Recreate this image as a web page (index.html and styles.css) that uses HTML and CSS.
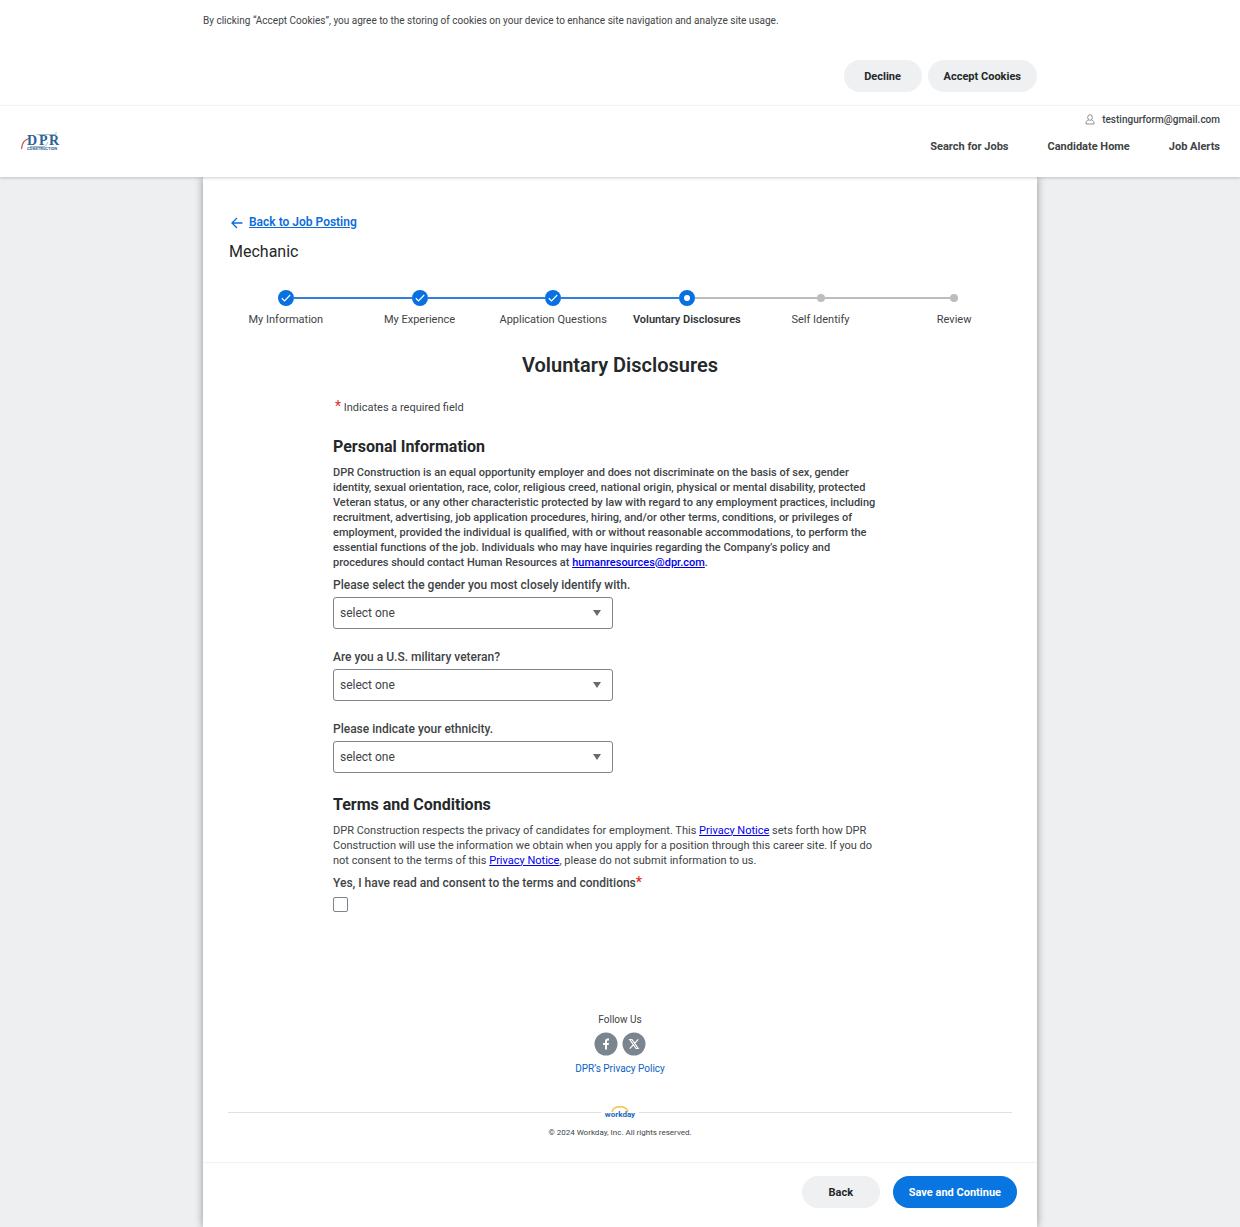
FILE: index.html
```html
<!DOCTYPE html>
<html lang="en">

<head>
    <meta charset="UTF-8">
    <meta name="viewport" content="width=device-width, initial-scale=1.0">
    <title>Voluntary Disclosures</title>
    <link rel="stylesheet" href="styles.css">
</head>

<body>
    <div class="cookie-banner">
        <div class="cookie-inner">
            <p>By clicking “Accept Cookies”, you agree to the storing of cookies on your device to enhance site navigation and analyze site usage.</p>
            <div class="cookie-actions">
                <button class="btn" type="button">Decline</button>
                <button class="btn" type="button">Accept Cookies</button>
            </div>
        </div>
    </div>

    <header class="site-header">
        <a class="logo" href="#" aria-label="DPR Construction">
            <svg width="40" height="22" viewBox="0 0 40 22">
                <path d="M1.5 18 C2 12.5 4.5 8.5 9 7.5" fill="none" stroke="#c4554d" stroke-width="1.2"/>
                <path d="M17 3.5 H36 V1 M10 15.5 H25 L28 11" fill="none" stroke="#a9bccb" stroke-width="1"/>
                <text class="logo-name" x="7 19 29" y="14" fill="#2b6196">DPR</text>
                <text class="logo-sub" x="7" y="19" fill="#2b6196">CONSTRUCTION</text>
            </svg>
        </a>
        <div class="header-right">
            <div class="account">
                <svg width="10" height="11" viewBox="0 0 10 11" fill="none" stroke="#8a8f94" stroke-width="1">
                    <ellipse cx="5" cy="3.5" rx="2.3" ry="2.8"/>
                    <path d="M3.6 6 C1.5 6.8 1 7.5 1 10 H9 C9 7.5 8.5 6.8 6.4 6"/>
                </svg>
                <span>testingurform@gmail.com</span>
            </div>
            <nav>
                <a href="#">Search for Jobs</a>
                <a href="#">Candidate Home</a>
                <a href="#">Job Alerts</a>
            </nav>
        </div>
    </header>

    <main class="page">
        <div class="job">
            <a class="back-link" href="#">
                <svg width="12" height="12" viewBox="0 0 12 12" fill="none" stroke="#0b6ddb" stroke-width="1.3">
                    <path d="M11.5 6 H1.2 M6 1 L1 6 L6 11"/>
                </svg>
                <span>Back to Job Posting</span>
            </a>
            <h3 class="job-title">Mechanic</h3>
        </div>

        <ol class="steps">
            <li class="done">
                <div class="track"><span class="dot"><svg width="10" height="10" viewBox="0 0 10 10"><path d="M0.8 5.3 L3.5 7.9 L9.2 2"/></svg></span></div>
                <span>My Information</span>
            </li>
            <li class="done">
                <div class="track"><span class="dot"><svg width="10" height="10" viewBox="0 0 10 10"><path d="M0.8 5.3 L3.5 7.9 L9.2 2"/></svg></span></div>
                <span>My Experience</span>
            </li>
            <li class="done">
                <div class="track"><span class="dot"><svg width="10" height="10" viewBox="0 0 10 10"><path d="M0.8 5.3 L3.5 7.9 L9.2 2"/></svg></span></div>
                <span>Application Questions</span>
            </li>
            <li class="current">
                <div class="track"><span class="dot"></span></div>
                <span>Voluntary Disclosures</span>
            </li>
            <li>
                <div class="track"><span class="dot"></span></div>
                <span>Self Identify</span>
            </li>
            <li>
                <div class="track"><span class="dot"></span></div>
                <span>Review</span>
            </li>
        </ol>

        <h2>Voluntary Disclosures</h2>

        <form class="form" id="disclosures">
            <p class="required-note"><span class="star">*</span> Indicates a required field</p>

            <h3>Personal Information</h3>
            <p class="statement">DPR Construction is an equal opportunity employer and does not discriminate on the basis of sex, gender identity, sexual orientation, race, color, religious creed, national origin, physical or mental disability, protected Veteran status, or any other characteristic protected by law with regard to any employment practices, including recruitment, advertising, job application procedures, hiring, and/or other terms, conditions, or privileges of employment, provided the individual is qualified, with or without reasonable accommodations, to perform the essential functions of the job. Individuals who may have inquiries regarding the Company’s policy and procedures should contact Human Resources at <a href="#">humanresources@dpr.com</a>.</p>

            <div class="field">
                <label for="gender">Please select the gender you most closely identify with.</label>
                <select id="gender">
                    <option>select one</option>
                </select>
            </div>
            <div class="field">
                <label for="veteran">Are you a U.S. military veteran?</label>
                <select id="veteran">
                    <option>select one</option>
                </select>
            </div>
            <div class="field">
                <label for="ethnicity">Please indicate your ethnicity.</label>
                <select id="ethnicity">
                    <option>select one</option>
                </select>
            </div>

            <h3>Terms and Conditions</h3>
            <p class="terms">DPR Construction respects the privacy of candidates for employment. This <a href="#">Privacy Notice</a> sets forth how DPR Construction will use the information we obtain when you apply for a position through this career site. If you do not consent to the terms of this <a href="#">Privacy Notice</a>, please do not submit information to us.</p>
            <div class="consent">
                <label for="consent">Yes, I have read and consent to the terms and conditions<span class="star">*</span></label>
                <input type="checkbox" id="consent">
            </div>
        </form>

        <footer class="footer">
            <p>Follow Us</p>
            <div class="social">
                <a href="#" aria-label="Facebook">
                    <svg width="24" height="24" viewBox="0 0 24 24">
                        <circle cx="12" cy="12" r="11.5" fill="#7b858f"/>
                        <path d="M11 17.5 V12.9 H9 V10.9 H11 V9.5 C11 7.5 12 6.5 13.8 6.5 H15 V8.4 H14 C13.3 8.4 13 8.8 13 9.5 V10.9 H15 L14.7 12.9 H13 V17.5 Z" fill="#fff"/>
                    </svg>
                </a>
                <a href="#" aria-label="X">
                    <svg width="24" height="24" viewBox="0 0 24 24">
                        <circle cx="12" cy="12" r="11.5" fill="#7b858f"/>
                        <path d="M7.8 7.5 H10 L16.2 16.5 H14 Z M16.2 7.3 L12.7 11.3 M11.3 12.9 L7.8 16.7" fill="none" stroke="#fff" stroke-width="1.2"/>
                    </svg>
                </a>
            </div>
            <a class="policy" href="#">DPR’s Privacy Policy</a>
            <div class="brand">
                <svg width="34" height="16" viewBox="0 0 34 16">
                    <path d="M9 8 C10.5 1 23.5 1 25 8" fill="none" stroke="#f3c24f" stroke-width="1.5"/>
                    <text class="brand-name" x="17" y="13" text-anchor="middle" fill="#1567b8">workday</text>
                </svg>
            </div>
            <small>© 2024 Workday, Inc. All rights reserved.</small>
        </footer>

        <div class="action-bar">
            <button class="btn" type="button">Back</button>
            <button class="btn btn-primary" type="submit" form="disclosures">Save and Continue</button>
        </div>
    </main>
</body>

</html>
```
FILE: styles.css
```css
* {
    box-sizing: border-box;
}

body {
    margin: 0;
    min-height: 100vh;
    display: flex;
    flex-direction: column;
    background: #eeeff1;
    color: #404446;
    font-family: Roboto, "Liberation Sans", sans-serif;
    font-size: 11px;
    line-height: 15px;
}

h2,
h3,
p {
    margin: 0;
}

.cookie-banner {
    background: #fff;
    border-bottom: 1px solid #fafafa;
}

.cookie-inner {
    max-width: 834px;
    margin: 0 auto;
    padding: 13px 0;
    font-size: 10px;
}

.cookie-actions {
    display: flex;
    justify-content: flex-end;
    gap: 6px;
    margin-top: 32px;
}

.btn {
    min-width: 78px;
    height: 32px;
    padding: 0 16px;
    border: none;
    border-radius: 16px;
    background: #eff0f1;
    color: #25282a;
    font-family: inherit;
    font-size: 11px;
    font-weight: 700;
    cursor: pointer;
}

.btn-primary {
    background: #0875e1;
    color: #fff;
}

.site-header {
    display: flex;
    justify-content: space-between;
    align-items: center;
    height: 71px;
    padding: 0 20px;
    background: #fff;
    box-shadow: 0 1px 3px rgba(0, 0, 0, 0.2);
    z-index: 1;
}

.logo svg {
    display: block;
}

.logo-name {
    font-family: "Liberation Serif", serif;
    font-size: 14px;
    font-weight: 700;
}

.logo-sub {
    font-size: 4px;
    font-weight: 700;
}

.header-right {
    display: flex;
    flex-direction: column;
    align-items: flex-end;
    gap: 12px;
    padding-bottom: 17px;
}

.account {
    display: flex;
    align-items: center;
    gap: 7px;
    font-size: 10px;
    font-weight: 500;
}

nav {
    display: flex;
    gap: 39px;
}

nav a {
    color: #404446;
    font-weight: 700;
    text-decoration: none;
}

.page {
    flex: 1;
    display: flex;
    flex-direction: column;
    width: 100%;
    max-width: 834px;
    margin: 0 auto;
    background: #fff;
    box-shadow: 0 0 8px rgba(0, 0, 0, 0.4);
}

.job {
    padding: 38px 26px 0;
}

.back-link {
    display: inline-flex;
    align-items: center;
    gap: 6px;
    padding-left: 2px;
    color: #0b6ddb;
    font-size: 12px;
    font-weight: 600;
}

.job-title {
    margin-top: 9px;
    color: #25282a;
    font-size: 16px;
    font-weight: 400;
    line-height: 20px;
}

.steps {
    display: grid;
    grid-template-columns: repeat(6, 1fr);
    margin: 27px 0 0;
    padding: 0 16px;
    list-style: none;
    text-align: center;
}

.track {
    display: flex;
    align-items: center;
    height: 18px;
    margin-bottom: 5px;
}

.track::before,
.track::after {
    content: "";
    flex: 1;
    height: 2px;
    background: #bdbdbd;
}

.done .track::before,
.done .track::after,
.current .track::before {
    background: #2f80de;
}

.steps li:first-child .track::before,
.steps li:last-child .track::after {
    background: none;
}

.dot {
    display: flex;
    align-items: center;
    justify-content: center;
    width: 8px;
    height: 8px;
    border-radius: 50%;
    background: #bdbdbd;
}

.done .dot {
    width: 16px;
    height: 16px;
    background: #0870e0;
}

.dot path {
    fill: none;
    stroke: #fff;
    stroke-width: 1.2;
}

.current .dot {
    width: 16px;
    height: 16px;
    border: 5px solid #0870e0;
    background: #fff;
}

.current {
    color: #303436;
    font-weight: 600;
}

h2 {
    margin-top: 26px;
    color: #25282a;
    font-size: 20px;
    font-weight: 600;
    line-height: 24px;
    text-align: center;
}

.form {
    padding: 0 130px;
}

.star {
    color: #de2e21;
    font-size: 14px;
    line-height: 12px;
}

.required-note {
    margin-top: 23px;
    padding-left: 2px;
}

.form h3 {
    margin: 22px 0 8px;
    color: #25282a;
    font-size: 16px;
    font-weight: 700;
    line-height: 20px;
}

.form a {
    color: #0000ee;
}

.statement,
.terms {
    max-width: 550px;
}

.statement {
    font-weight: 500;
}

.field {
    margin-bottom: 21px;
}

.statement + .field {
    margin-top: 8px;
}

.form label {
    display: block;
    margin-bottom: 4px;
    font-size: 12px;
    font-weight: 500;
}

select {
    appearance: none;
    display: block;
    width: 280px;
    max-width: 100%;
    height: 32px;
    padding: 0 6px;
    border: 1px solid #7b858f;
    border-radius: 3px;
    background: #fff url("data:image/svg+xml,%3Csvg xmlns='http://www.w3.org/2000/svg' width='8' height='6'%3E%3Cpath d='M0 0h8L4 6z' fill='%23666c72'/%3E%3C/svg%3E") no-repeat right 11px center;
    color: #404446;
    font-family: inherit;
    font-size: 12px;
}

.consent {
    margin-top: 8px;
}

.consent input {
    appearance: none;
    display: block;
    width: 15px;
    height: 15px;
    margin: 6px 0 0;
    border: 1px solid #7b858f;
    border-radius: 2px;
    background: #fff;
}

.footer {
    display: flex;
    flex-direction: column;
    align-items: center;
    margin-top: auto;
    padding: 0 25px 22px;
    font-size: 10px;
}

.social {
    display: flex;
    gap: 4px;
    margin: 5px 0;
}

.social svg {
    display: block;
}

.policy {
    color: #0b62c4;
    text-decoration: none;
}

.brand {
    display: flex;
    align-items: center;
    align-self: stretch;
    gap: 2px;
    margin: 28px 0 5px;
}

.brand::before,
.brand::after {
    content: "";
    flex: 1;
    height: 1px;
    background: #dfe1e3;
}

.brand-name {
    font-size: 8px;
    font-weight: 700;
}

small {
    font-size: 8px;
}

.action-bar {
    display: flex;
    justify-content: flex-end;
    gap: 13px;
    padding: 13px 20px 19px;
    border-top: 1px solid #f1f2f3;
}
```
